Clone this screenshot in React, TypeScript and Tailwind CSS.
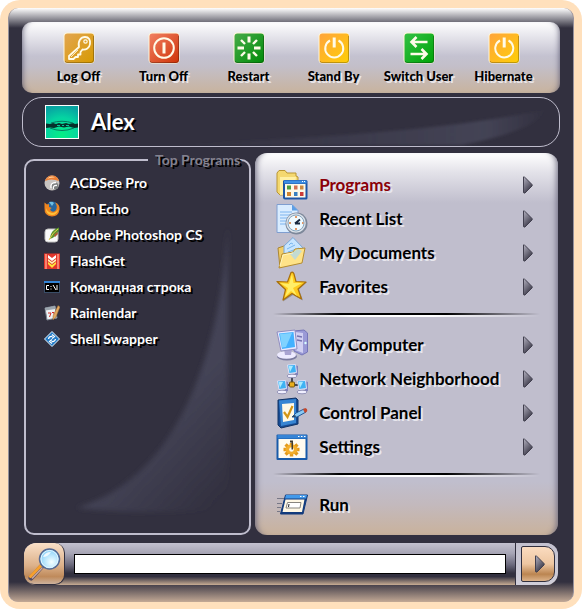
import React, { useState } from 'react';

type IconProps = { className?: string };

const Tile = ({ from, to, children }: { from: string; to: string; children: React.ReactNode }) => {
  const id = `tile-${from.slice(1)}-${to.slice(1)}`;
  return (
    <svg viewBox="0 0 32 32" className="size-8" aria-hidden="true">
      <defs>
        <linearGradient id={id} x1="0" y1="0" x2="1" y2="1">
          <stop offset="0" stopColor={from} />
          <stop offset="1" stopColor={to} />
        </linearGradient>
      </defs>
      <rect x="0.5" y="0.5" width="31" height="31" rx="4" fill="#fff6d8" />
      <rect x="1.5" y="1.5" width="29.5" height="29.5" rx="3" fill={`url(#${id})`} />
      <path d="M2 29 Q2 30.5 4 30.5 H28 Q30.5 30.5 30.5 28 V4" fill="none" stroke="#000" strokeOpacity="0.25" />
      <g fill="none" stroke="#fffbe8" strokeWidth="2">
        {children}
      </g>
    </svg>
  );
};

const KeyIcon = () => (
  <Tile from="#e2a550" to="#d79a00">
    <path d="M16 15 C14.500 9 18 5 22 5 C26 5 27.500 8 27 12 C26.500 16 23 18 19.500 17.500 L17.500 20 V22.500 H15 V25 H12.500 L10.500 27 H6 V24 Z" strokeLinejoin="round" strokeWidth="1.800" />
    <circle cx="22.500" cy="9.500" r="1.700" strokeWidth="1.200" />
    <path d="M8 25 L15 18" strokeWidth="0.800" />
  </Tile>
);

const TurnOffIcon = () => (
  <Tile from="#f18062" to="#cf3306">
    <circle cx="16" cy="16" r="9.800" />
    <path d="M16 10.500 V21.500" strokeWidth="3" />
  </Tile>
);

const RestartIcon = () => (
  <Tile from="#47ab48" to="#008b08">
    <path d="M16 4.500 V10.500 M16 21.500 V27.500 M4.500 16 H11 M21 16 H27.500" strokeWidth="3" />
    <path d="M8 8 L12 12 M20 20 L24 24 M24 8 L20 12 M8 24 L12 20" strokeWidth="2.400" />
  </Tile>
);

const PowerIcon = () => (
  <Tile from="#ffa43c" to="#ffcf05">
    <path d="M12 8.500 A9 9 0 1 0 20.500 8.500" />
    <path d="M16.200 5.500 V15.500" strokeWidth="3" />
  </Tile>
);

const SwitchIcon = () => (
  <Tile from="#33c044" to="#00a407">
    <path d="M24.500 10 H9 M13.500 5 L8.500 10 L13.500 15" strokeWidth="2.600" />
    <path d="M7.500 22 H23 M18.500 17 L23.500 22 L18.500 27" strokeWidth="2.600" />
  </Tile>
);

const ProgramsIcon = ({ className }: IconProps) => (
  <svg viewBox="0 0 32 32" className={className} aria-hidden="true">
    <path d="M1 4 L3 1.500 H9 L11 4 H20 V7 L22 8 V25 L4 26 L1 23 Z" fill="#f4d870" stroke="#b99532" />
    <path d="M4 8 H20 L18 25 L4 26 Z" fill="#fff0a4" />
    <path d="M8 11 H30 Q31.500 11 31.500 12.500 V29 Q31.500 30.500 30 30.500 H9 Q7 30.500 7 28.500 V12 Z" fill="#1e55a5" />
    <rect x="8" y="11.500" width="22.500" height="3" fill="#3d8fe4" />
    <rect x="9" y="15" width="20.500" height="13.500" fill="#fdf9e8" />
    <path d="M26 12.500 h1 M28 12.500 h1" stroke="#fff" />
    <rect x="11" y="16.500" width="4" height="4" fill="#4e9e40" />
    <rect x="18" y="16.500" width="3.500" height="4" fill="#d27051" />
    <rect x="24" y="16.500" width="3.500" height="4" fill="#c98a42" />
    <rect x="11" y="23" width="4" height="4" fill="#d3842f" />
    <rect x="18" y="23" width="3.500" height="4" fill="#3880bf" />
    <rect x="24" y="23" width="3.500" height="4" fill="#cc3b38" />
  </svg>
);

const RecentIcon = ({ className }: IconProps) => (
  <svg viewBox="0 0 32 32" className={className} aria-hidden="true">
    <path d="M1 1.500 H16 L22 7.500 V29.500 H1 Z" fill="#d9ecff" stroke="#7f9ed0" />
    <path d="M16 1.500 V7.500 H22 Z" fill="#5f9fe4" />
    <path d="M4 9 H16 M4 12 H17 M4 15 H13 M4 18 H10 M4 21 H10" stroke="#7cb4ee" />
    <circle cx="20.500" cy="20.500" r="11" fill="#7d889a" />
    <circle cx="20" cy="20" r="9.800" fill="#dbe2ea" />
    <circle cx="20" cy="20" r="8" fill="#effaff" stroke="#87a5bd" />
    <path d="M19 20.500 L24 16.500 M19 20.500 H24" stroke="#16263c" strokeWidth="2" />
    <path d="M20 13 v2 M20 25 v2 M13 20 h2 M26 20 h1.500" stroke="#e07936" strokeWidth="1.500" />
  </svg>
);

const DocumentsIcon = ({ className }: IconProps) => (
  <svg viewBox="0 0 32 32" className={className} aria-hidden="true">
    <path d="M2 11 L8 9 L12 12 V23 L4 31 Z" fill="#f1cd68" stroke="#ab8633" />
    <path d="M8 9 L17 0.500 L28 12 L20 24 L8 20 Z" fill="#c7e5ff" stroke="#7aa6d6" />
    <path d="M13 8 l2 -2 2 1 M11 12 l8 -4 M12 15 l11 -4 M15 18 l9 -4" stroke="#78b6ee" fill="none" />
    <path d="M3 31 L6 17 L17 15 L19 12 L29 11 L26 26 Z" fill="#ffe388" stroke="#b58c31" strokeLinejoin="round" />
    <path d="M14 17 L22 12 L26 14 L19 23 Z" fill="#b4d8e6" opacity="0.800" />
    <path d="M4 29 L7 18 L17 16" fill="none" stroke="#fff5bb" />
  </svg>
);

const StarIcon = ({ className }: IconProps) => (
  <svg viewBox="0 0 32 32" className={className} aria-hidden="true">
    <path d="M16.500 2 L20 11.500 L31 11 L23 18.500 L27 29.500 L17 24 L7 30.500 L10 19.500 L1.500 12 L12 11.500 Z" fill="#6e6b70" opacity="0.600" />
    <path d="M15 1.500 Q17 0.500 18 3 L20 10.500 L30 11 L22 18 L25.500 28 L16 22.500 L7 29 L9.500 18.500 L1 10.500 L11.500 11 Z" fill="#ffcb20" stroke="#a9700b" strokeLinejoin="round" strokeWidth="1.200" />
    <path d="M16 3 L17.500 12 L26 12 L17 17 L21 25 L15 20 L9 26 L12 17 L4 12 L13 13 Z" fill="#ffee68" />
  </svg>
);

const ComputerIcon = ({ className }: IconProps) => (
  <svg viewBox="0 0 32 32" className={className} aria-hidden="true">
    <path d="M18 2 L28 1 L31.500 4 V23 L26 26 L18 22 Z" fill="#9a9ad6" stroke="#7676b8" />
    <path d="M19 3 L27 4 V24 L19 21 Z" fill="#d1d0f2" />
    <path d="M21 7 l5 1 M21 11 l5 1" stroke="#7473b0" strokeWidth="1.500" />
    <circle cx="29.500" cy="14" r="1.200" fill="#d7ffff" />
    <ellipse cx="11" cy="27.500" rx="10" ry="4" fill="#7b7b9f" />
    <ellipse cx="10.500" cy="26" rx="9.500" ry="3.800" fill="#edeaff" />
    <path d="M8 20 h8 l-1 6 H9 Z" fill="#aaa4d2" />
    <path d="M1 3 L19 1 L21 20 L5 22 Z" fill="#e8e9ff" stroke="#8f8dc0" />
    <path d="M3 4.500 L17.500 3 L19 18 L6 20 Z" fill="#43b1ff" />
    <path d="M4 5 L16 4 L10 18 L6 18.500 Z" fill="#98dfff" opacity="0.700" />
  </svg>
);

const SmallPc = ({ x, y }: { x: number; y: number }) => (
  <g transform={`translate(${x} ${y})`}>
    <path d="M8 1 l3 1 v9 l-3 1z" fill="#8182bb" />
    <ellipse cx="5" cy="12" rx="5" ry="1.800" fill="#f0efff" stroke="#7777a2" strokeWidth="0.700" />
    <path d="M0.500 1 L8.500 0.500 L9.500 8.500 L2 9.500 Z" fill="#3eb2f3" stroke="#dedff6" />
    <path d="M1.500 2 L6 2 L3 8 Z" fill="#a8eaff" />
  </g>
);

const NetworkIcon = ({ className }: IconProps) => (
  <svg viewBox="0 0 32 32" className={className} aria-hidden="true">
    <path d="M16 12 V22 M8 22 H25" stroke="#454955" strokeWidth="2" />
    <SmallPc x={11} y={1} />
    <SmallPc x={1} y={17} />
    <SmallPc x={21} y={17} />
    <rect x="13.500" y="19" width="5" height="5" rx="1" fill="#e8ae1d" stroke="#775711" />
  </svg>
);

const ControlIcon = ({ className }: IconProps) => (
  <svg viewBox="0 0 32 32" className={className} aria-hidden="true">
    <path d="M2 3 L20 1 L22 3 V27 L5 31 L2 28 Z" fill="#174b93" stroke="#103467" />
    <path d="M3 3.500 L20 2 V26 L5 29 Z" fill="#3785d3" />
    <path d="M6 7 L18 6 V23 L7 25 Z" fill="#fff9e7" />
    <path d="M8 15 L11.500 20 L16.500 9" stroke="#d39616" strokeWidth="2.200" fill="none" />
    <path d="M16 20 L20 16 L28 12 L30 15 L21 20 Z" fill="#8ac9f3" stroke="#205a98" />
    <path d="M27 12.500 L29 11 Q32 11.500 31 14.500 L29 16 Z" fill="#c4472b" />
    <path d="M16 20 l3 -2 1 1.500 Z" fill="#202c40" />
  </svg>
);

const SettingsIcon = ({ className }: IconProps) => (
  <svg viewBox="0 0 32 32" className={className} aria-hidden="true">
    <rect x="0.500" y="3.500" width="31" height="25.500" rx="1" fill="#185aa9" />
    <rect x="1.500" y="4" width="29" height="3.500" fill="#3684d6" />
    <path d="M22 5.500 h1.500 M25 5.500 h1.500 M28 5.500 h1.500" stroke="#fff" />
    <rect x="2.500" y="8" width="27" height="19" fill="#fffbf0" />
    <g stroke="#e39a1c" strokeWidth="3.500">
      <path d="M7.500 18.500 H23.500 M15.500 12 V25.500 M9.500 13.500 L21.500 23.500 M21.500 13.500 L9.500 23.500" />
    </g>
    <ellipse cx="15.500" cy="18.500" rx="6" ry="5" fill="#f3ae2b" />
    <circle cx="15.500" cy="18.500" r="2.300" fill="#fffbf0" />
    <path d="M14 9.500 h3 v9 h-1.500 v-7 h-1.500 z" fill="#413b30" />
  </svg>
);

const RunIcon = ({ className }: IconProps) => (
  <svg viewBox="0 0 32 32" className={className} aria-hidden="true">
    <path d="M1 9.500 h7 M1 14.500 h5 M1 18.500 h4 M1 22.500 h3" stroke="#777786" />
    <path d="M9.500 6 H31.500 L27 25 H4.500 Z" fill="#123b7d" stroke="#123b7d" strokeLinejoin="round" />
    <path d="M10 6 H31 L30 9.500 H9 Z" fill="#4299ea" />
    <path d="M24 7.500 h1.500 M27 7.500 h1.500" stroke="#fff" />
    <path d="M9.500 10.500 H28.500 L26 23 H6.500 Z" fill="#fff8e5" />
    <path d="M11.500 13.500 H25 L24 19 H10 Z" fill="#fff" stroke="#88857e" />
    <path d="M13 15 l-0.500 3" stroke="#222" />
  </svg>
);

const AcdseeIcon = ({ className }: IconProps) => (
  <svg viewBox="0 0 16 16" className={className} aria-hidden="true">
    <circle cx="8" cy="8" r="7.500" fill="#c9c5c2" />
    <path d="M1 6 Q3 0.500 8 0.500 Q13.500 0.500 15 6 Q7 3 1 6" fill="#ee8034" />
    <path d="M3 4 Q7 0 11 2.500 Q6 2 3 4" fill="#ffd5a4" />
    <circle cx="11" cy="11" r="3.500" fill="#7d8080" />
    <path d="M7 13 Q6 7.500 12 7.500 M9.500 14 Q8.500 10 13 10.500" fill="none" stroke="#fff" strokeWidth="1.300" />
  </svg>
);

const FirefoxIcon = ({ className }: IconProps) => (
  <svg viewBox="0 0 16 16" className={className} aria-hidden="true">
    <circle cx="8.500" cy="7" r="6.500" fill="#27679f" />
    <path d="M5 1 Q8 0 10 2 L8 5 Z" fill="#6ec0e4" />
    <path d="M0.500 1.500 L3 3.500 L5 3 L5 6 L8 7 Q5 8 7 10 Q10 12 12 9 Q14 5 11 1.500 Q16 3 15.500 8.500 Q14.500 15.500 8 15.500 Q0 15 0.500 7 Z" fill="#ef8520" />
    <path d="M2 7 Q1.500 14 8 14 Q13 14 14.500 8 Q12 12 8 12 Q3 11 2 7" fill="#ffc238" />
  </svg>
);

const PhotoshopIcon = ({ className }: IconProps) => (
  <svg viewBox="0 0 16 16" className={className} aria-hidden="true">
    <rect x="1" y="2" width="13" height="13" rx="3" fill="#fafafa" stroke="#c2c2c2" />
    <path d="M15 0.500 Q9 2 7 7 L5.500 12 Q12 11 15 3 Z" fill="#58952e" />
    <path d="M14 2 Q9 5 5 13" stroke="#e8cf4e" fill="none" />
    <path d="M10 8 l3 -3 1 2 -3 3z" fill="#af5b35" />
  </svg>
);

const FlashGetIcon = ({ className }: IconProps) => (
  <svg viewBox="0 0 16 16" className={className} aria-hidden="true">
    <rect x="0" y="0.500" width="16" height="15.500" fill="#e1352b" />
    <path d="M2 1 v15 M14 1 v15" stroke="#ff9b84" strokeWidth="1.500" />
    <path d="M4 2 L8 5 L12 2 V5 L8 8 L4 5 Z" fill="#fff" />
    <path d="M4 6 L8 9 L12 6 V8 L8 11 L4 8 Z" fill="#fff3b0" />
    <path d="M4 9 L8 12 L12 9 V11 L8 15 L4 11 Z" fill="#ffe43c" />
  </svg>
);

const ConsoleIcon = ({ className }: IconProps) => (
  <svg viewBox="0 0 16 16" className={className} aria-hidden="true">
    <rect x="0" y="2" width="16" height="12" fill="#3a4e68" />
    <rect x="0" y="2" width="16" height="2" fill="#3384d5" />
    <rect x="1" y="4" width="14" height="9" fill="#000" />
    <path d="M5 6.500 H2.500 V10.500 H5 M7 7 v1 M7 9.500 v1 M9 6 l3 5 M13 6 v5" stroke="#fff" fill="none" />
  </svg>
);

const CalendarIcon = ({ className }: IconProps) => (
  <svg viewBox="0 0 16 16" className={className} aria-hidden="true">
    <path d="M1 3 L11 1 L13 13 L3 15 Z" fill="#eef1f4" stroke="#7e8793" />
    <path d="M1 3 L11 1 L11.500 4 L1.500 5.500 Z" fill="#9ca5ae" />
    <path d="M4 8 h3 l-1.500 4 M8 7.500 h2 v2 h1 v2.500 h-2" stroke="#d42c24" fill="none" />
    <path d="M14 0.500 l2 1.500 -4 10 -3 3 0 -4z" fill="#e3a862" stroke="#8c602f" strokeWidth="0.500" />
  </svg>
);

const SwapperIcon = ({ className }: IconProps) => (
  <svg viewBox="0 0 16 16" className={className} aria-hidden="true">
    <path d="M8 0.500 L15.500 8 L8 15.500 L0.500 8 Z" fill="#237cc8" stroke="#e7f5ff" />
    <path d="M4.500 8 Q5 5 8.500 5.500 M8 3.500 l2.500 2 -2.500 2 M11.500 8 Q11 11 7.500 10.500 M8 8.500 l-2.500 2 2.500 2" fill="none" stroke="#fff" strokeWidth="1.200" />
  </svg>
);

const Arrow = () => (
  <svg viewBox="0 0 10 18" className="h-[18px] w-[10px] shrink-0" aria-hidden="true">
    <defs>
      <linearGradient id="arrow-fill" x1="0" y1="0" x2="0.600" y2="1">
        <stop offset="0" stopColor="#b5b3c1" />
        <stop offset="0.500" stopColor="#777584" />
        <stop offset="1" stopColor="#333140" />
      </linearGradient>
    </defs>
    <path d="M0.500 1 Q1 0 2 1.500 L9 8.500 Q9.500 9.500 9 10 L2 17 Q0.500 17.500 0.500 16 Z" fill="url(#arrow-fill)" stroke="#42404f" />
  </svg>
);

const MagnifierIcon = () => (
  <svg viewBox="0 0 34 34" className="size-[34px]" role="img" aria-label="Search">
    <defs>
      <radialGradient id="lens" cx="0.600" cy="0.650" r="0.600">
        <stop offset="0" stopColor="#f5ffff" />
        <stop offset="1" stopColor="#8dd3fa" />
      </radialGradient>
    </defs>
    <path d="M4 31 L15 19" stroke="#544b60" strokeWidth="5" strokeLinecap="round" />
    <path d="M3.500 29.500 L14 18.500" stroke="#f6a02d" strokeWidth="3" strokeLinecap="round" />
    <path d="M5 31.500 L15.500 20.500" stroke="#caa9a0" strokeWidth="1.500" />
    <circle cx="22.500" cy="12" r="10" fill="url(#lens)" stroke="#576a92" strokeWidth="1.500" />
    <circle cx="22.500" cy="12" r="8.500" fill="none" stroke="#e1f6ff" />
    <path d="M16 10 Q18 5 24 5 Q21 10 16 10" fill="#fff" opacity="0.800" />
  </svg>
);

const Avatar = () => (
  <svg viewBox="0 0 32 32" className="size-[34px] border border-white" role="img" aria-label="Alex">
    <defs>
      <radialGradient id="lake" cx="0.500" cy="0.900" r="0.900">
        <stop offset="0" stopColor="#05ee85" />
        <stop offset="0.600" stopColor="#05d3a2" />
        <stop offset="1" stopColor="#08a4a2" />
      </radialGradient>
    </defs>
    <rect width="32" height="32" fill="url(#lake)" />
    <path d="M0 17.500 L4 18 L7 17 L10 18 L13 17 L16 18 L20 17 L23 18 L27 17 L29 18 L32 17.500 V21.500 L28 22 L23 20.500 L18 21.500 L13 20.500 L8 22 L4 21.500 L0 22 Z" fill="#07312c" />
    <path d="M5 17 Q16 13.500 27 17 M4 22 Q16 27 28 22" stroke="#087961" fill="none" />
    <path d="M11 19.500 h3 M16 19.500 h2 M20 19.500 h3" stroke="#05c69a" />
  </svg>
);

const sessionActions = [
  { label: 'Log Off', Icon: KeyIcon },
  { label: 'Turn Off', Icon: TurnOffIcon },
  { label: 'Restart', Icon: RestartIcon },
  { label: 'Stand By', Icon: PowerIcon },
  { label: 'Switch User', Icon: SwitchIcon },
  { label: 'Hibernate', Icon: PowerIcon },
];

const topPrograms = [
  { label: 'ACDSee Pro', Icon: AcdseeIcon },
  { label: 'Bon Echo', Icon: FirefoxIcon },
  { label: 'Adobe Photoshop CS', Icon: PhotoshopIcon },
  { label: 'FlashGet', Icon: FlashGetIcon },
  { label: 'Командная строка', Icon: ConsoleIcon },
  { label: 'Rainlendar', Icon: CalendarIcon },
  { label: 'Shell Swapper', Icon: SwapperIcon },
];

const menuGroups = [
  [
    { label: 'Programs', Icon: ProgramsIcon, submenu: true },
    { label: 'Recent List', Icon: RecentIcon, submenu: true },
    { label: 'My Documents', Icon: DocumentsIcon, submenu: true },
    { label: 'Favorites', Icon: StarIcon, submenu: true },
  ],
  [
    { label: 'My Computer', Icon: ComputerIcon, submenu: true },
    { label: 'Network Neighborhood', Icon: NetworkIcon, submenu: true },
    { label: 'Control Panel', Icon: ControlIcon, submenu: true },
    { label: 'Settings', Icon: SettingsIcon, submenu: true },
  ],
  [{ label: 'Run', Icon: RunIcon, submenu: false }],
];

const SessionBar = () => (
  <div className="grid grid-cols-6 rounded-[10px] bg-[linear-gradient(180deg,#ffffff_0%,#e4e3ea_22%,#c4c2d0_48%,#c3bfc9_62%,#c8b39e_100%)] px-[14px] pt-[10px] pb-[9px] shadow-[inset_6px_0_6px_-6px_#55536b,inset_-6px_0_6px_-6px_#55536b]">
    {sessionActions.map(({ label, Icon }) => (
      <button key={label} type="button" className="flex flex-col items-center gap-1">
        <Icon />
        <span className="text-[13px] leading-4 font-black whitespace-nowrap text-black [text-shadow:2px_2px_0_#e9e6ea]">{label}</span>
      </button>
    ))}
  </div>
);

const UserBar = () => (
  <div className="relative mt-1 flex h-[50px] items-center gap-3 overflow-hidden rounded-[20px] border border-[#bfbdcd] px-[22px]">
    <svg viewBox="0 0 538 50" preserveAspectRatio="none" className="absolute inset-0 size-full" aria-hidden="true">
      <defs>
        <linearGradient id="user-glow" x1="0" x2="1">
          <stop offset="0.100" stopColor="#55566b" stopOpacity="0" />
          <stop offset="0.850" stopColor="#55566b" stopOpacity="0.500" />
          <stop offset="1" stopColor="#55566b" stopOpacity="0" />
        </linearGradient>
        <filter id="user-soften">
          <feGaussianBlur stdDeviation="1.500" />
        </filter>
      </defs>
      <path d="M120 49 Q400 40 525 12 Q515 34 440 49 Z" fill="url(#user-glow)" filter="url(#user-soften)" />
    </svg>
    <Avatar />
    <span className="relative text-[22px] leading-6 font-bold text-white [text-shadow:2px_2px_0_#000]">Alex</span>
  </div>
);

const TopPrograms = () => (
  <fieldset className="relative rounded-[10px] border-2 border-[#bfbdcd]">
    <legend className="mr-[9px] ml-auto pl-[7px] text-[14px] leading-4 font-bold text-[#84828f] [text-shadow:2px_2px_0_#000]">Top Programs</legend>
    <svg viewBox="0 0 228 374" preserveAspectRatio="none" className="absolute inset-0 size-full" aria-hidden="true">
      <defs>
        <linearGradient id="panel-glow" gradientUnits="userSpaceOnUse" x1="130" y1="250" x2="212" y2="325">
          <stop offset="0.100" stopColor="#4a4a5e" stopOpacity="0.750" />
          <stop offset="1" stopColor="#4a4a5e" stopOpacity="0" />
        </linearGradient>
        <filter id="soften">
          <feGaussianBlur stdDeviation="2.500" />
        </filter>
      </defs>
      <path d="M206 60 C198 200 150 320 52 348 Q120 356 206 350 Z" fill="url(#panel-glow)" filter="url(#soften)" />
    </svg>
    <ul className="relative pt-[2px] pl-[18px]">
      {topPrograms.map(({ label, Icon }) => (
        <li key={label}>
          <button type="button" className="flex h-[26px] items-center gap-[10px]">
            <Icon className="size-4 shrink-0" />
            <span className="text-[14px] leading-4 font-bold whitespace-nowrap text-white [text-shadow:2px_2px_0_#000]">{label}</span>
          </button>
        </li>
      ))}
    </ul>
  </fieldset>
);

const Divider = () => (
  <div className="px-[2px] pt-[9px] pb-[11px]">
    <div className="h-[2px] bg-[linear-gradient(90deg,transparent,#000_25%,#000_65%,transparent)]" />
    <div className="h-[2px] bg-[linear-gradient(90deg,transparent,#fff_30%,#fff_60%,transparent)]" />
  </div>
);

const MainMenu = () => (
  <nav className="mt-px rounded-[12px] bg-[linear-gradient(180deg,#ffffff_0%,#e3e2e9_5%,#c0becd_13%,#c0becd_86%,#c3b9bd_92%,#c9b29c_100%)] px-4 pt-[15px] pb-[13px] shadow-[inset_7px_0_6px_-6px_#66647a,inset_-7px_0_6px_-6px_#66647a]">
    {menuGroups.map((group, index) => (
      <React.Fragment key={index}>
        {index > 0 && <Divider />}
        <ul className="pr-[9px] pl-[5px]">
          {group.map(({ label, Icon, submenu }) => (
            <li key={label}>
              <button type="button" className="flex h-[34px] w-full items-center gap-[11px] text-left">
                <Icon className="size-8 shrink-0" />
                <span
                  className={`flex-1 text-[17px] leading-5 font-bold whitespace-nowrap [text-shadow:2px_2px_0_#e8e7ee] ${
                    label === 'Programs' ? 'text-[#8b0008]' : 'text-black'
                  }`}
                >
                  {label}
                </span>
                {submenu && <Arrow />}
              </button>
            </li>
          ))}
        </ul>
      </React.Fragment>
    ))}
  </nav>
);

const SearchBar = () => {
  const [query, setQuery] = useState('');

  return (
    <form
      onSubmit={(e) => e.preventDefault()}
      className="mx-[2px] mt-2 flex h-[42px] items-stretch overflow-hidden rounded-[12px] bg-[linear-gradient(180deg,#c3c1cf_0%,#a6a4b4_25%,#6b697c_52%,#32303f_72%,#32303f_80%,#c8ad94_100%)]"
    >
      <label
        htmlFor="search"
        className="flex w-[41px] items-center justify-center rounded-[10px] border-r border-b border-[#32303f] bg-[linear-gradient(180deg,#fae0c8_0%,#dcb18a_55%,#bf8a5b_82%,#cdb29d_100%)]"
      >
        <MagnifierIcon />
      </label>
      <input
        id="search"
        type="text"
        value={query}
        onChange={(e) => setQuery(e.target.value)}
        className="mx-[9px] h-5 min-w-0 flex-1 self-center border border-black bg-white px-1 text-[13px] text-black outline-none"
      />
      <div className="flex border-l border-[#32303f] bg-[linear-gradient(180deg,#c3c1cf,#d0ced9)] py-[3px] pr-[3px] pl-[5px]">
        <button
          type="submit"
          aria-label="Go"
          className="flex w-[34px] items-center justify-center rounded-l-[2px] rounded-r-[10px] border border-[#32303f] bg-[linear-gradient(180deg,#fbdcc0_0%,#edc6a1_50%,#bb8551_80%,#dcb38b_100%)] pl-1"
        >
          <Arrow />
        </button>
      </div>
    </form>
  );
};

export default function App() {
  return (
    <div className="bg-white font-['Lato','Noto_Sans',sans-serif]">
      <div className="rounded-[20px] bg-[#ffe0bc] px-2 pt-2 pb-[7px]">
        <div className="rounded-[10px] border-x border-[#96919b] bg-[linear-gradient(180deg,#fff_0,#32303f_20px,#32303f_calc(100%-20px),#c3a995_100%)] px-[13px] pt-[14px] pb-[17px]">
          <SessionBar />
          <UserBar />
          <main className="mx-[2px] mt-[5px] grid grid-cols-[3fr_4fr] gap-1">
            <TopPrograms />
            <MainMenu />
          </main>
          <SearchBar />
        </div>
      </div>
    </div>
  );
}
